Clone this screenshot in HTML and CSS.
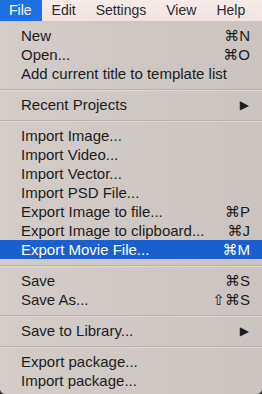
FILE: index.html
```html
<!DOCTYPE html>
<html>
<head>
<meta charset="utf-8">
<link rel="stylesheet" href="styles.css">
</head>
<body>
<div class="menubar">
  <span class="mb-item active">File</span>
  <span class="mb-item">Edit</span>
  <span class="mb-item">Settings</span>
  <span class="mb-item">View</span>
  <span class="mb-item">Help</span>
</div>
<div class="menu">
  <div class="item"><span>New</span><span class="key">⌘N</span></div>
  <div class="item"><span>Open...</span><span class="key">⌘O</span></div>
  <div class="item"><span>Add current title to template list</span></div>
  <div class="sep"></div>
  <div class="item"><span>Recent Projects</span><span class="arrow">▶</span></div>
  <div class="sep"></div>
  <div class="item"><span>Import Image...</span></div>
  <div class="item"><span>Import Video...</span></div>
  <div class="item"><span>Import Vector...</span></div>
  <div class="item"><span>Import PSD File...</span></div>
  <div class="item"><span>Export Image to file...</span><span class="key">⌘P</span></div>
  <div class="item"><span>Export Image to clipboard...</span><span class="key">⌘J</span></div>
  <div class="item selected"><span>Export Movie File...</span><span class="key">⌘M</span></div>
  <div class="sep"></div>
  <div class="item"><span>Save</span><span class="key">⌘S</span></div>
  <div class="item"><span>Save As...</span><span class="key">⇧⌘S</span></div>
  <div class="sep"></div>
  <div class="item"><span>Save to Library...</span><span class="arrow">▶</span></div>
  <div class="sep"></div>
  <div class="item"><span>Export package...</span></div>
  <div class="item"><span>Import package...</span></div>
</div>
</body>
</html>
```

FILE: styles.css
```css
html, body {
  margin: 0;
  padding: 0;
  background: #2a2a2a;
  width: 262px;
  height: 394px;
  overflow: hidden;
  font-family: "Liberation Sans", "DejaVu Sans", sans-serif;
  font-size: 15px;
  color: #1c1c1c;
}
.menubar {
  height: 22px;
  background: linear-gradient(#f7ecea, #f1e3e1);
  display: flex;
  align-items: stretch;
  box-sizing: border-box;
  border-bottom: 1px solid #cfc5c2;
  font-size: 14px;
}
.mb-item {
  padding: 0 10px;
  display: flex;
  align-items: center;
  color: #2a2a2a;
  line-height: 21px;
}
.mb-item.active {
  background: #1d6fe3;
  color: #ffffff;
  padding: 0 10px 0 9px;
}
.menu {
  background: linear-gradient(90deg, #d4ccc9, #cbc3c0);
  padding: 4px 0;
  border-radius: 0 0 5px 5px;
  height: 372px;
  box-sizing: border-box;
}
.item {
  height: 19px;
  display: flex;
  align-items: center;
  justify-content: space-between;
  padding: 0 12px 0 21px;
  white-space: nowrap;
}
.item.selected {
  background: #1a5fcf;
  color: #ffffff;
}
.key {
  font-family: "Liberation Sans", "DejaVu Sans", sans-serif;
  font-size: 15px;
}
.arrow {
  font-family: "DejaVu Sans", sans-serif;
  font-size: 12px;
  padding-right: 1px;
}
.sep {
  height: 12px;
  display: flex;
  align-items: center;
}
.sep::before {
  content: "";
  display: block;
  width: 100%;
  height: 1px;
  background: #b9b1ae;
  box-shadow: 0 1px 0 #ddd6d3;
}
```
